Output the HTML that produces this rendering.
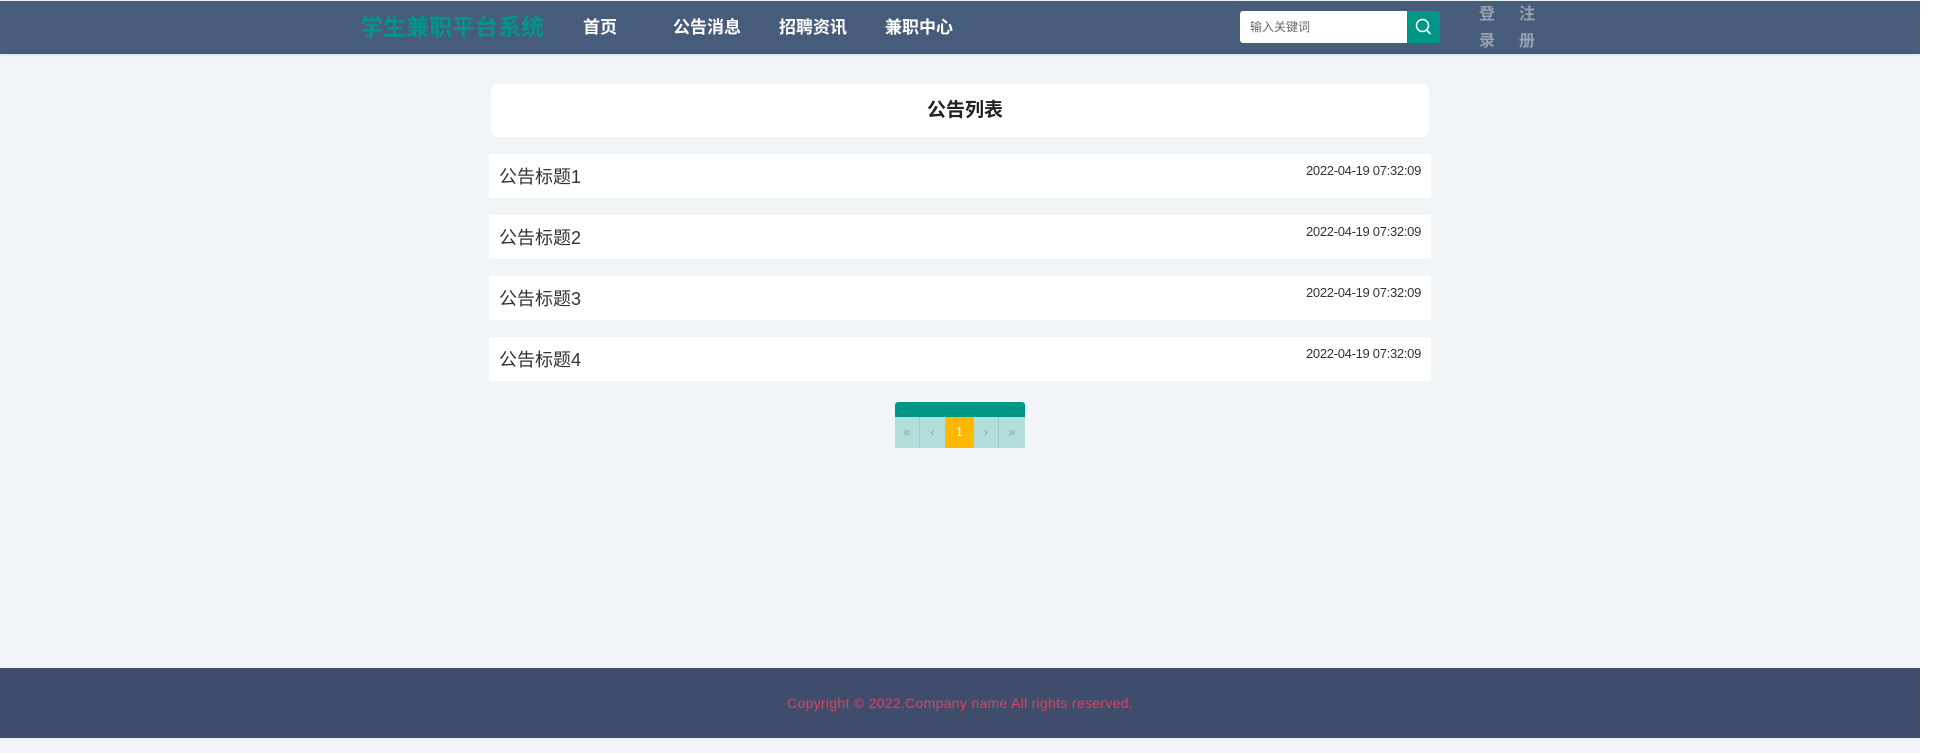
<!DOCTYPE html>
<html><head><meta charset="utf-8"><style>
*{margin:0;padding:0;box-sizing:border-box}
body{width:1936px;height:753px;background:#f2f5f8;position:relative;overflow:hidden;font-family:"Liberation Sans","Noto Sans CJK SC",sans-serif}
.abs{position:absolute}
.hdr{left:0;top:1px;width:1920px;height:53px;background:#475b7a;box-shadow:0 1px 3px rgba(0,0,0,.1)}
.logo{left:360px;top:13px;font-size:23px;font-weight:bold;color:#009688;line-height:28px}
.nav{top:17px;font-size:17px;font-weight:bold;color:#fff;line-height:22px}
.search{left:1240px;top:11px;width:167px;height:32px;background:#fff;border-radius:3px 0 0 3px;font-size:12px;color:#666;padding:9px 10px;line-height:14px}
.btn{left:1407px;top:11px;width:33px;height:32px;background:#009688;border-radius:0 3px 3px 0}
.au{font-size:16px;font-weight:bold;color:#9aa3ad;line-height:27px;width:18px;top:1px}
.strip{left:1920px;top:0;width:16px;height:753px;background:#fff}
.card{left:491px;top:84px;width:938px;height:53px;background:#fff;border-radius:8px;text-align:center;font-size:19px;font-weight:bold;color:#222;line-height:53px;padding-left:10px}
.row{left:489px;width:942px;height:44px;background:#fff}
.row .t{position:absolute;left:10px;top:12px;font-size:18px;color:#333;line-height:22px}
.row .d{position:absolute;right:10px;top:9px;font-size:13px;color:#333;line-height:16px;letter-spacing:-0.3px}
.pg{left:895px;top:402px;width:130px;height:46px}
.ft{left:0;top:668px;width:1920px;height:70px;background:#3f4c6b;text-align:center;color:#e0405f;font-size:14px;line-height:70px;letter-spacing:0.3px}
</style></head><body>
<div class="abs hdr"></div>
<div class="abs logo">学生兼职平台系统</div>
<div class="abs nav" style="left:583px">首页</div>
<div class="abs nav" style="left:673px">公告消息</div>
<div class="abs nav" style="left:779px">招聘资讯</div>
<div class="abs nav" style="left:885px">兼职中心</div>
<div class="abs search">输入关键词</div>
<div class="abs btn"><svg width="33" height="32" viewBox="0 0 33 32"><circle cx="15.5" cy="14.5" r="6" fill="none" stroke="#fff" stroke-width="1.5"/><path d="M19.5 19l4 4" stroke="#fff" stroke-width="1.6"/></svg></div>
<div class="abs au" style="left:1479px">登<br>录</div>
<div class="abs au" style="left:1519px">注<br>册</div>
<div class="abs strip"></div>
<div class="abs card">公告列表</div>
<div class="abs row" style="top:154px"><span class="t">公告标题1</span><span class="d">2022-04-19 07:32:09</span></div>
<div class="abs row" style="top:215px"><span class="t">公告标题2</span><span class="d">2022-04-19 07:32:09</span></div>
<div class="abs row" style="top:276px"><span class="t">公告标题3</span><span class="d">2022-04-19 07:32:09</span></div>
<div class="abs row" style="top:337px"><span class="t">公告标题4</span><span class="d">2022-04-19 07:32:09</span></div>
<div class="abs pg">
<div style="height:15px;background:#009688;border-radius:3px 3px 0 0"></div>
<div style="display:flex;height:31px;font-size:12px;line-height:31px;text-align:center;color:#7aa">
<div style="width:25px;background:#b2dfdb;border-right:1px solid #9cc">«</div>
<div style="width:25px;background:#b2dfdb">‹</div>
<div style="width:29px;background:#ffb800;color:#fff">1</div>
<div style="width:25px;background:#b2dfdb;border-right:1px solid #9cc">›</div>
<div style="width:26px;background:#b2dfdb">»</div>
</div></div>
<div class="abs ft">Copyright © 2022.Company name All rights reserved.</div>
</body></html>
